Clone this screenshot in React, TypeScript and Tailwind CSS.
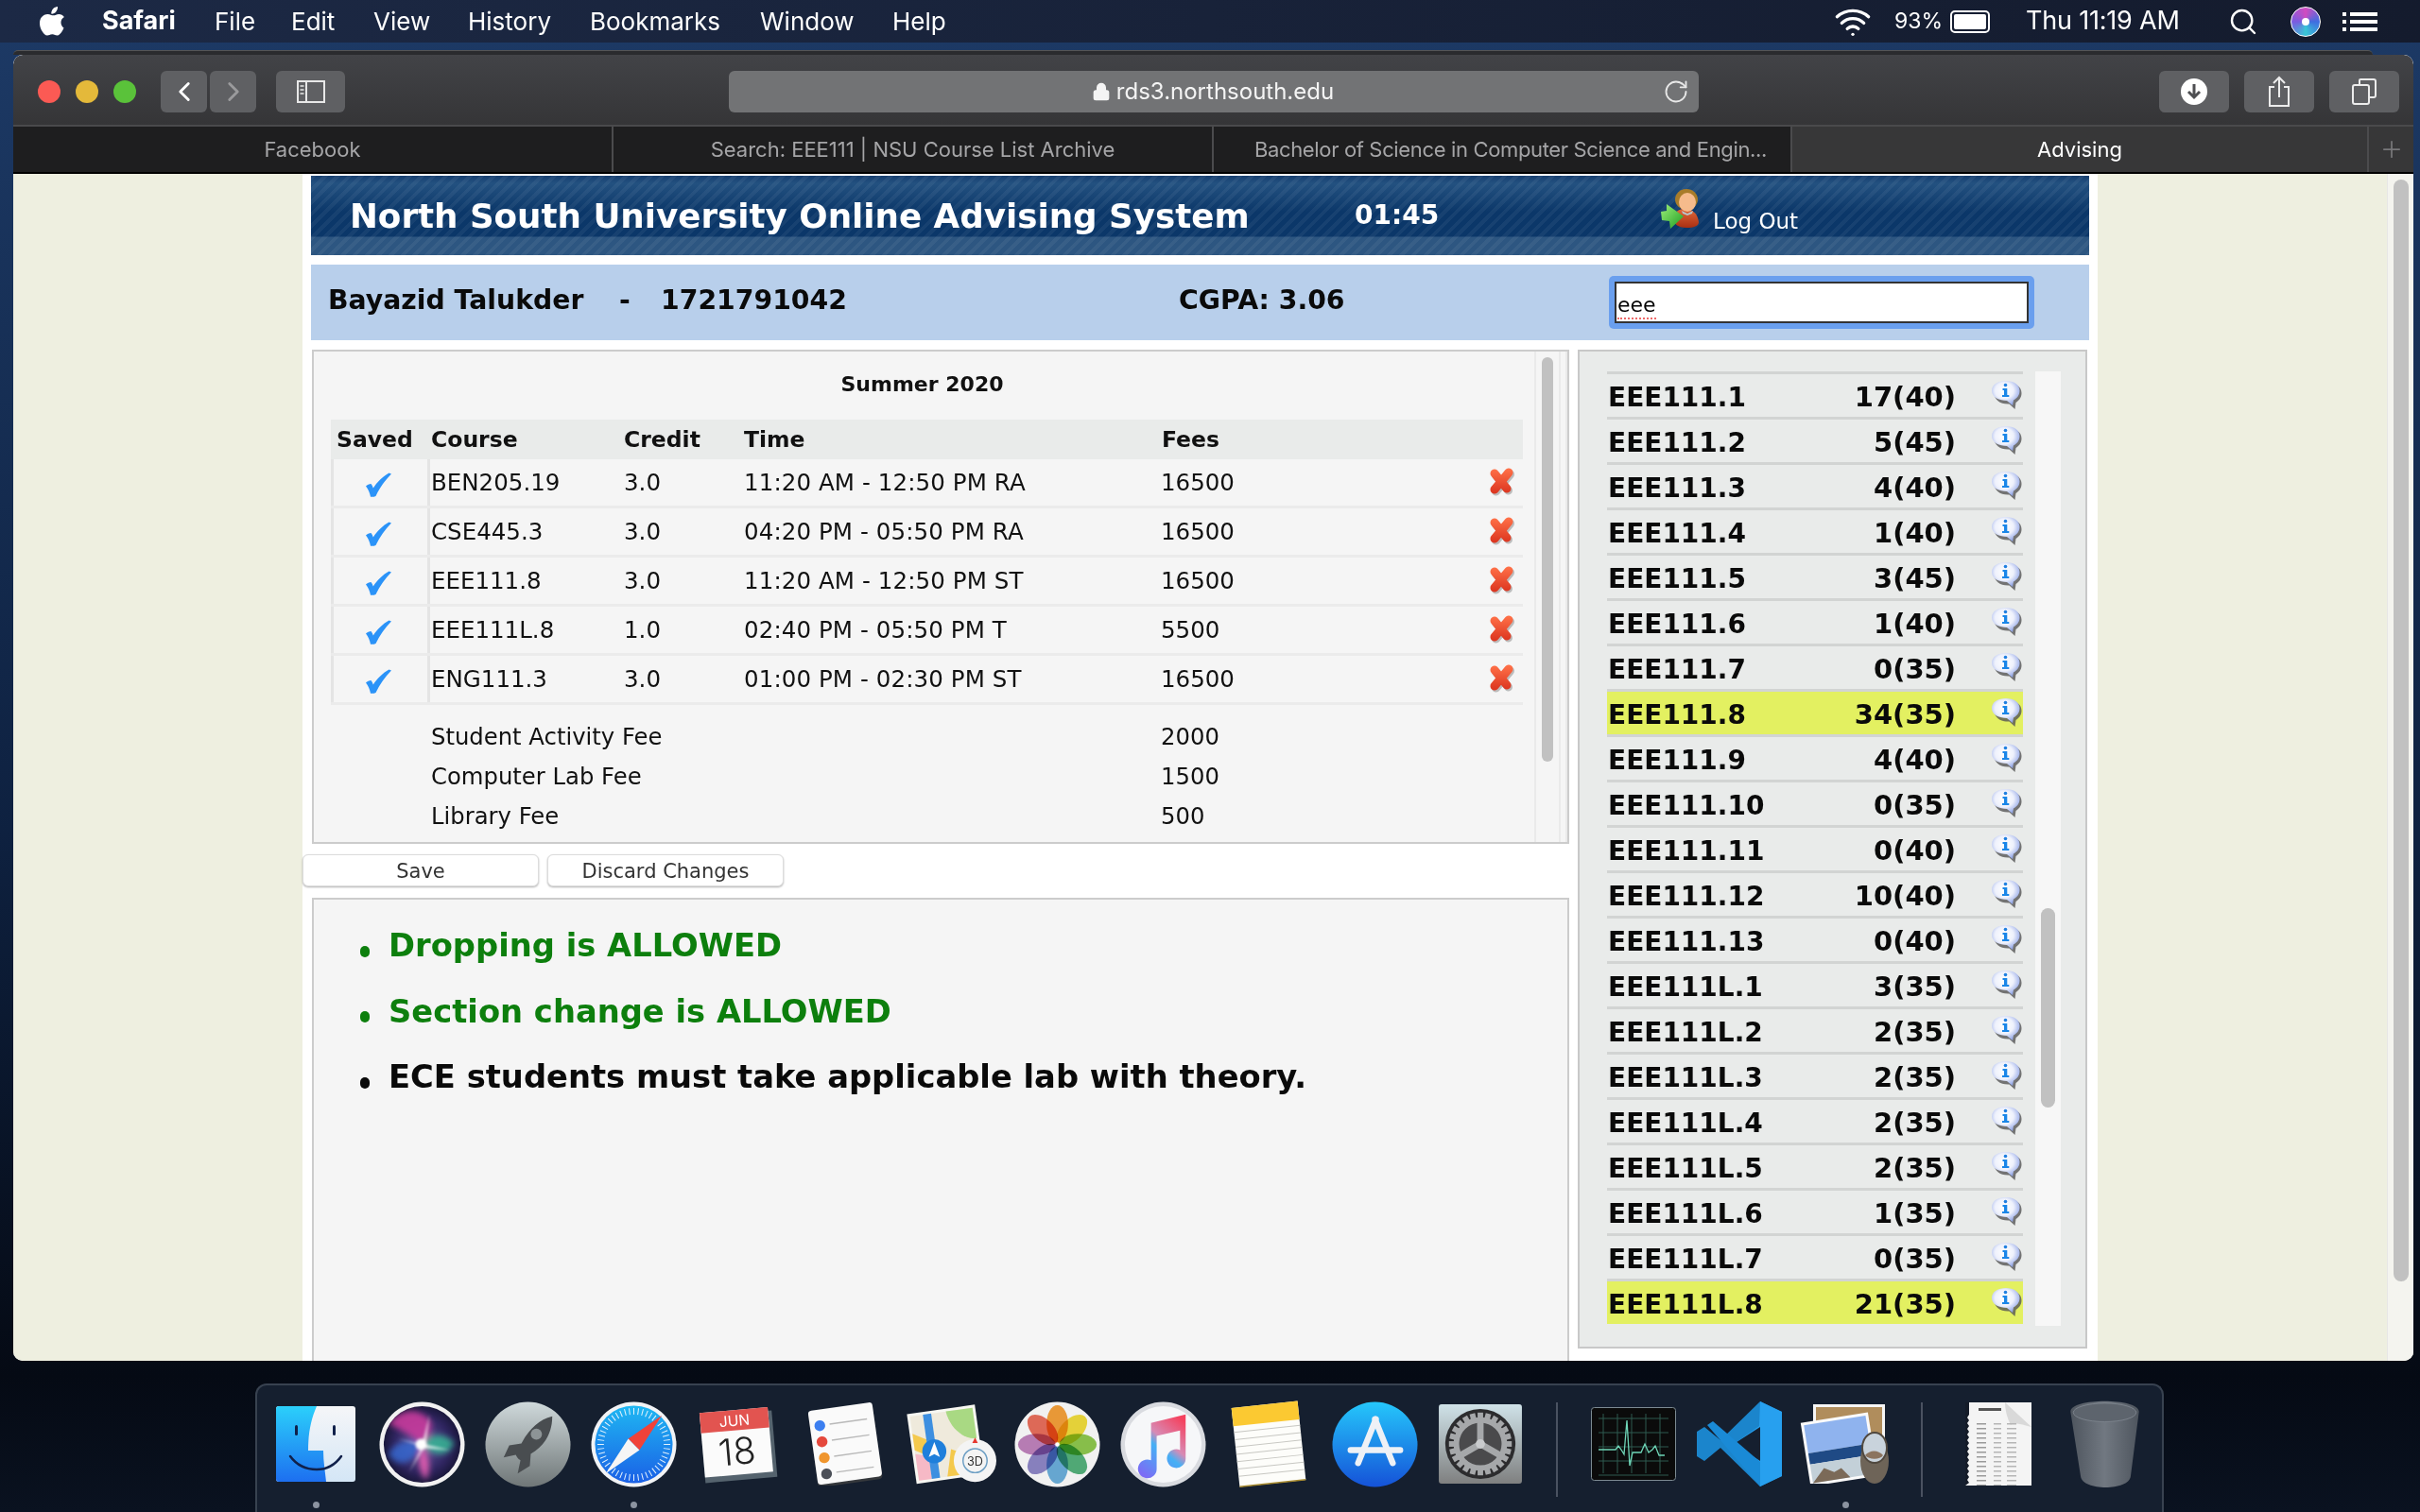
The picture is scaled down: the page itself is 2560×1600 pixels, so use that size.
import { ChevronLeft, ChevronRight, Lock, RotateCw, Plus, Search, Wifi } from 'lucide-react';

const verdana = "font-['DejaVu_Sans',sans-serif]";

const menus = [
  { label: 'File', cls: 'w-[81px]' },
  { label: 'Edit', cls: 'w-[87px]' },
  { label: 'View', cls: 'w-[100px]' },
  { label: 'History', cls: 'w-[129px]' },
  { label: 'Bookmarks', cls: 'w-[180px]' },
  { label: 'Window', cls: 'w-[140px]' },
  { label: 'Help', cls: 'w-[70px]' },
];

const courses = [
  ['BEN205.19', '3.0', '11:20 AM - 12:50 PM RA', '16500'],
  ['CSE445.3', '3.0', '04:20 PM - 05:50 PM RA', '16500'],
  ['EEE111.8', '3.0', '11:20 AM - 12:50 PM ST', '16500'],
  ['EEE111L.8', '1.0', '02:40 PM - 05:50 PM T', '5500'],
  ['ENG111.3', '3.0', '01:00 PM - 02:30 PM ST', '16500'],
];

const fees = [
  ['Student Activity Fee', '2000'],
  ['Computer Lab Fee', '1500'],
  ['Library Fee', '500'],
];

const sections = [
  ['EEE111.1', '17(40)'],
  ['EEE111.2', '5(45)'],
  ['EEE111.3', '4(40)'],
  ['EEE111.4', '1(40)'],
  ['EEE111.5', '3(45)'],
  ['EEE111.6', '1(40)'],
  ['EEE111.7', '0(35)'],
  ['EEE111.8', '34(35)', 'on'],
  ['EEE111.9', '4(40)'],
  ['EEE111.10', '0(35)'],
  ['EEE111.11', '0(40)'],
  ['EEE111.12', '10(40)'],
  ['EEE111.13', '0(40)'],
  ['EEE111L.1', '3(35)'],
  ['EEE111L.2', '2(35)'],
  ['EEE111L.3', '2(35)'],
  ['EEE111L.4', '2(35)'],
  ['EEE111L.5', '2(35)'],
  ['EEE111L.6', '1(35)'],
  ['EEE111L.7', '0(35)'],
  ['EEE111L.8', '21(35)', 'on'],
];

function AppleLogo() {
  return (
    <svg viewBox="0 0 26 31" className="w-[26px] h-[31px]" fill="#fff">
      <path d="M19 0c.2 2.200-.6 4-1.800 5.400-1.300 1.500-3 2.400-4.900 2.200-.2-2 .7-4 1.900-5.300C15.400.9 17.300.1 19 0z" />
      <path d="M25.500 22.500c-.7 1.600-1 2.300-1.900 3.700-1.300 1.900-3 4.300-5.200 4.300-2 0-2.500-1.300-5.100-1.300-2.700 0-3.300 1.300-5.300 1.300-2.200 0-3.800-2.200-5.100-4C-.4 22-1 15.300 1.700 11.500 3.500 9 6.200 7.900 8.500 7.900c2.500 0 4 1.400 6 1.400s3.200-1.400 5.900-1.400c2 0 4.200 1.100 5.500 3-4.900 2.700-4.100 9.500-.4 11.600z" />
    </svg>
  );
}

function CheckMark() {
  return (
    <svg viewBox="0 0 28 26" className="w-[28px] h-[26px]">
      <path d="M1 14.500c1.500-1.500 3.500-2.500 5.500-2.500 1 1.200 1.700 2.700 2.300 4.500C13 10 19 4 25.500 0.500L28 1.500C21 8.500 15.500 16.500 11.500 25c-1.500.8-3.500 1-5.500.8C5.300 21.500 3.500 17.500 1 14.500z" fill="#2b93f8" />
    </svg>
  );
}

function RedX() {
  return (
    <svg viewBox="0 0 32 32" className="w-[32px] h-[32px]">
      <defs>
        <linearGradient id="xred" gradientUnits="userSpaceOnUse" x1="0" y1="2" x2="0" y2="30">
          <stop offset="0" stopColor="#ff7148" />
          <stop offset="1" stopColor="#d9301c" />
        </linearGradient>
      </defs>
      <g fill="none" stroke="#777" strokeOpacity="0.45" strokeWidth="9" strokeLinecap="round" transform="translate(1.500 2)">
        <path d="M8 7l13 16" />
        <path d="M23 6L8 24" />
      </g>
      <g fill="none" stroke="url(#xred)" strokeWidth="9" strokeLinecap="round">
        <path d="M8 7l13 16" />
        <path d="M23 6L8 24" />
      </g>
    </svg>
  );
}

function InfoBubble() {
  return (
    <svg viewBox="0 0 32 30" className="w-[32px] h-[30px]">
      <defs>
        <radialGradient id="ibub" cx="0.45" cy="0.4" r="0.6">
          <stop offset="0" stopColor="#ffffff" />
          <stop offset="0.55" stopColor="#eef1fc" />
          <stop offset="1" stopColor="#96a9e8" />
        </radialGradient>
      </defs>
      <path d="M16 1c8 0 14.500 4 14.500 11 0 5-3 8-6 10l-1 7-6-5.500C8 24 1.500 19 1.500 12S8 1 16 1z" fill="#555" opacity="0.8" transform="translate(1 1)" />
      <path d="M15 0c8 0 14.500 4 14.500 10.500 0 5-3 8-6.500 10l-1 5.500-6-5C8 21 0 17.500 0 10.500S7 0 15 0z" fill="url(#ibub)" />
      <circle cx="14.500" cy="4.500" r="1.800" fill="#1f7fe0" />
      <path d="M11.500 8h4.800v7h2v2h-7.300v-2h2v-5h-1.500z" fill="#1a86e8" />
    </svg>
  );
}

function PersonIcon() {
  return (
    <svg viewBox="0 0 46 46" className="w-[46px] h-[46px]">
      <defs>
        <linearGradient id="shirt" x1="0" y1="0" x2="0" y2="1">
          <stop offset="0" stopColor="#e0683a" />
          <stop offset="1" stopColor="#a92f12" />
        </linearGradient>
        <linearGradient id="arrowg" x1="0" y1="0" x2="1" y2="1">
          <stop offset="0" stopColor="#9df07a" />
          <stop offset="1" stopColor="#1e9c22" />
        </linearGradient>
      </defs>
      <path d="M14 30c1-7 5-9 12-9s13 5 14 14c0 4-5 6-13 6-9 0-14-4-13-11z" fill="url(#shirt)" />
      <ellipse cx="27" cy="11" rx="12" ry="11" fill="#a87c2a" />
      <ellipse cx="28" cy="14" rx="9" ry="10" fill="#f6bb8c" />
      <path d="M22 23l6 3 6-3-1 3-5 2-5-2z" fill="#b9c4c8" />
      <path d="M0 24l6-1 0-7 18 13-14 13-1-8-8-1z" fill="url(#arrowg)" />
    </svg>
  );
}

function Finder() {
  return (
    <svg viewBox="0 0 84 80" className="w-[84px] h-[80px]">
      <defs>
        <linearGradient id="fb" x1="0" y1="0" x2="0" y2="1">
          <stop offset="0" stopColor="#2bd0fb" />
          <stop offset="1" stopColor="#1d6ff0" />
        </linearGradient>
        <linearGradient id="fw" x1="0" y1="0" x2="0" y2="1">
          <stop offset="0" stopColor="#f5f6f8" />
          <stop offset="1" stopColor="#d4e6f6" />
        </linearGradient>
      </defs>
      <rect width="84" height="80" rx="3" fill="url(#fw)" />
      <path d="M3 0h40c-6 14-9 28-9 47h16c0 12 2 23 3 33H3a3 3 0 0 1-3-3V3a3 3 0 0 1 3-3z" fill="url(#fb)" />
      <rect x="20" y="20" width="3" height="11" rx="1.500" fill="#10204a" />
      <rect x="60" y="20" width="3" height="11" rx="1.500" fill="#10204a" />
      <path d="M15 53c8 11 18 14 28 14 10 0 19-4 26-14" fill="none" stroke="#10204a" strokeWidth="2.500" strokeLinecap="round" />
    </svg>
  );
}

function Siri() {
  return (
    <svg viewBox="0 0 92 92" className="w-[91px] h-[91px]">
      <defs>
        <radialGradient id="sb" cx="0.5" cy="0.5" r="0.6">
          <stop offset="0" stopColor="#6a5aa8" />
          <stop offset="0.6" stopColor="#2f2560" />
          <stop offset="1" stopColor="#0b0e22" />
        </radialGradient>
        <filter id="sblur" x="-20%" y="-20%" width="140%" height="140%">
          <feGaussianBlur stdDeviation="3" />
        </filter>
        <filter id="sglow" x="-50%" y="-50%" width="200%" height="200%">
          <feGaussianBlur stdDeviation="1.500" />
        </filter>
        <clipPath id="sclip">
          <circle cx="46" cy="46" r="41" />
        </clipPath>
      </defs>
      <circle cx="46" cy="46" r="45.500" fill="#f1f1f1" />
      <circle cx="46" cy="46" r="41" fill="url(#sb)" />
      <g clipPath="url(#sclip)">
        <g filter="url(#sblur)">
          <path d="M10 24C24 6 44 6 56 22c0 12-4 20-10 24C34 36 22 30 10 24z" fill="#c93a9c" opacity="0.9" />
          <path d="M46 46c10-14 24-12 34-2-4 14-20 18-34 2z" fill="#37b795" opacity="0.85" />
          <path d="M46 46C34 38 18 42 10 56c10 16 26 12 36-10z" fill="#3567cf" opacity="0.85" />
          <path d="M46 46c8 12 10 26 4 38-8-10-10-24-4-38z" fill="#e35cb0" opacity="0.95" />
        </g>
        <g filter="url(#sglow)">
          <path d="M46 46L54 14l-4 32 26 6-28-2-16 26 14-28-26-8z" fill="#fff" opacity="0.7" />
          <circle cx="45" cy="46" r="6" fill="#fff" />
        </g>
      </g>
    </svg>
  );
}

function Launchpad() {
  return (
    <svg viewBox="0 0 92 92" className="w-[91px] h-[91px]">
      <defs>
        <linearGradient id="lp" x1="0" y1="0" x2="0" y2="1">
          <stop offset="0" stopColor="#cfd9db" />
          <stop offset="1" stopColor="#6f7677" />
        </linearGradient>
      </defs>
      <circle cx="46" cy="46" r="45.500" fill="url(#lp)" />
      <path d="M72 16c-14 3-25 14-33 29l-13 2-6 13 13-3c1 2 2 4 5 6l-3 14 13-8 1-13c14-8 23-21 23-40z" fill="#494d50" />
      <circle cx="55" cy="35" r="6" fill="#8d9496" />
    </svg>
  );
}

function Safari() {
  const ticks = Array.from({ length: 48 }, (_, i) => i * 7.500);
  return (
    <svg viewBox="0 0 92 92" className="w-[91px] h-[91px]">
      <defs>
        <linearGradient id="sf" x1="0" y1="0" x2="0" y2="1">
          <stop offset="0" stopColor="#1fb7f2" />
          <stop offset="1" stopColor="#1a60e6" />
        </linearGradient>
      </defs>
      <circle cx="46" cy="46" r="45.500" fill="#f2f3f5" />
      <circle cx="46" cy="46" r="41.500" fill="url(#sf)" />
      {ticks.map((t) => (
        <rect key={t} x="45.500" y="7" width="1" height="7" fill="#e6f3fd" transform={`rotate(${t} 46 46)`} />
      ))}
      <path d="M76 15L40 40l12 12z" fill="#f04239" />
      <path d="M16 77l36-25-12-12z" fill="#f5f5f5" />
    </svg>
  );
}

function Calendar() {
  return (
    <svg viewBox="0 0 90 90" className="w-[88px] h-[88px]">
      <g transform="rotate(-5 45 45)">
        <rect x="5" y="12" width="78" height="72" fill="#55636e" />
        <rect x="5" y="8" width="74" height="70" fill="#fbfbfb" />
        <rect x="5" y="8" width="74" height="22" fill="#e25450" />
        <text x="42" y="25" textAnchor="middle" fontFamily="Inter, sans-serif" fontSize="16" fill="#fff">JUN</text>
        <text x="42" y="67" textAnchor="middle" fontFamily="Inter, sans-serif" fontWeight="300" fontSize="40" fill="#222">18</text>
      </g>
    </svg>
  );
}

function Reminders() {
  const dots = ['#3c7ff0', '#e5483c', '#f0962e', '#4c5058'];
  return (
    <svg viewBox="0 0 84 92" className="w-[80px] h-[88px]">
      <g transform="rotate(-8 42 46)">
        <rect x="6" y="6" width="72" height="84" rx="4" fill="#35383c" />
        <rect x="6" y="4" width="72" height="83" rx="4" fill="#fafafa" />
        {dots.map((c, i) => (
          <g key={c}>
            <circle cx="17" cy={22 + i * 18} r="6" fill={c} />
            <rect x="28" y={21 + i * 18} width="42" height="1.500" fill="#b9b9b9" />
          </g>
        ))}
      </g>
    </svg>
  );
}

function Maps() {
  return (
    <svg viewBox="0 0 98 88" className="w-[96px] h-[88px]">
      <g transform="rotate(-8 45 42)">
        <rect x="6" y="6" width="74" height="76" fill="#f7f7f2" />
        <rect x="9" y="9" width="68" height="70" fill="#efeadc" />
        <path d="M48 9h29v33c-14 0-27-14-29-33z" fill="#a9d983" />
        <path d="M9 28l14 8v18L9 46z" fill="#f4c94d" />
        <path d="M9 50l14 4v25H9z" fill="#f6b9c6" />
        <rect x="23" y="9" width="9" height="70" fill="#3d8fe0" />
        <path d="M48 50l20 10-10 19H40z" fill="#f4c94d" />
      </g>
      <circle cx="31" cy="52" r="13" fill="#1f7fdb" />
      <path d="M31 42l6 16-6-3-6 3z" fill="#fff" />
      <circle cx="75" cy="62" r="23" fill="#f4f4f4" />
      <circle cx="75" cy="62" r="13" fill="none" stroke="#6d9fc4" strokeWidth="1.500" />
      <path d="M75 37l3 6h-6z" fill="#e5372e" />
      <text x="75" y="67" textAnchor="middle" fontFamily="Inter, sans-serif" fontSize="13" fill="#333">3D</text>
    </svg>
  );
}

function Photos() {
  const petals = ['#f6a13a', '#f2dd3c', '#8fc94e', '#54b27c', '#6cb0dc', '#8f87c8', '#c183be', '#ea6f5c'];
  return (
    <svg viewBox="0 0 92 92" className="w-[91px] h-[91px]">
      <circle cx="46" cy="46" r="45.500" fill="#f1f1f1" />
      {petals.map((c, i) => (
        <ellipse key={c} cx="46" cy="24" rx="11.500" ry="20" fill={c} style={{ mixBlendMode: 'multiply' }} transform={`rotate(${i * 45} 46 46)`} />
      ))}
      <circle cx="46" cy="46" r="2" fill="#fff" />
    </svg>
  );
}

function Music() {
  return (
    <svg viewBox="0 0 92 92" className="w-[91px] h-[91px]">
      <defs>
        <linearGradient id="mu" x1="0.2" y1="1" x2="0.8" y2="0">
          <stop offset="0" stopColor="#7c6cf5" />
          <stop offset="0.45" stopColor="#45b0f5" />
          <stop offset="0.6" stopColor="#d78bb5" />
          <stop offset="1" stopColor="#f5425f" />
        </linearGradient>
      </defs>
      <circle cx="46" cy="46" r="45.500" fill="#d9dbe0" />
      <circle cx="46" cy="46" r="41" fill="#f6f7f9" />
      <path d="M33 23l37-9v47a10 10 0 1 1-6-9V31l-25 6v35a10 10 0 1 1-6-9z" fill="url(#mu)" />
    </svg>
  );
}

function Notes() {
  const lines = [30, 38, 46, 54, 62, 70, 78];
  return (
    <svg viewBox="0 0 84 94" className="w-[82px] h-[92px]">
      <g transform="rotate(-6 42 47)">
        <rect x="6" y="4" width="72" height="86" fill="#fdfdfa" />
        <rect x="6" y="4" width="72" height="20" fill="#fbc932" />
        {lines.map((y) => (
          <rect key={y} x="6" y={y} width="72" height="1" fill="#c7c7c2" />
        ))}
        <rect x="6" y="89" width="72" height="1.500" fill="#a78a2e" />
      </g>
    </svg>
  );
}

function AppStore() {
  return (
    <svg viewBox="0 0 92 92" className="w-[91px] h-[91px]">
      <defs>
        <linearGradient id="as" x1="0" y1="0" x2="0" y2="1">
          <stop offset="0" stopColor="#25c7fb" />
          <stop offset="1" stopColor="#1552d8" />
        </linearGradient>
      </defs>
      <circle cx="46" cy="46" r="45.500" fill="url(#as)" />
      <g stroke="#eef1f6" strokeWidth="6.500" strokeLinecap="round">
        <path d="M47 19L28 66" />
        <path d="M46 19l19 47" />
        <path d="M20 52h53" />
      </g>
    </svg>
  );
}

function SystemPrefs() {
  const teeth = Array.from({ length: 24 }, (_, i) => i * 15);
  return (
    <svg viewBox="0 0 90 86" className="w-[90px] h-[84px]">
      <defs>
        <linearGradient id="sp" x1="0" y1="0" x2="0" y2="1">
          <stop offset="0" stopColor="#cfe2e8" />
          <stop offset="1" stopColor="#7f8080" />
        </linearGradient>
      </defs>
      <rect width="90" height="86" rx="3" fill="url(#sp)" />
      <circle cx="45" cy="43" r="38" fill="#2c2c2e" />
      {teeth.map((t) => (
        <rect key={t} x="42" y="9" width="6" height="9" fill="#a6a8aa" transform={`rotate(${t} 45 43)`} />
      ))}
      <circle cx="45" cy="43" r="26" fill="#4a4a4c" stroke="#a6a8aa" strokeWidth="6" />
      <g stroke="#a6a8aa" strokeWidth="7">
        <path d="M45 43V19" />
        <path d="M45 43l21 12" />
        <path d="M45 43L24 55" />
      </g>
      <circle cx="45" cy="43" r="5" fill="#c9cbcd" />
    </svg>
  );
}

function ActivityMonitor() {
  const v = [10, 25, 40, 55, 70];
  return (
    <svg viewBox="0 0 90 78" className="w-[90px] h-[78px]">
      <rect x="0.500" y="0.500" width="89" height="77" rx="3" fill="#0b0b0b" stroke="#7c8a92" />
      <g stroke="#2e5a50" strokeWidth="1">
        {v.map((x) => (
          <path key={x} d={`M${x + 3} 7V70`} />
        ))}
        {v.map((y) => (
          <path key={y} d={`M8 ${y + 2}H82`} />
        ))}
      </g>
      <path d="M8 45h18l3-4 3 4 3 5 3-36 3 48 3-14h9l4-9 4 9 4-3 3-4 4 10h6" fill="none" stroke="#6fd6b8" strokeWidth="1.300" />
    </svg>
  );
}

function VsCode() {
  return (
    <svg viewBox="0 0 92 92" className="w-[92px] h-[92px]">
      <path d="M68 1L26 42 9 28 1 33v26l8 5 17-14 42 41 23-11V12z" fill="#1b85cc" />
      <path d="M68 1l-1 26-27 19 27 19 1 26 23-11V12z" fill="#27a0ef" />
      <path d="M68 28v36L40 46z" fill="#151f2f" />
      <path d="M12 26L68 91 68 65 18 22z" fill="#1a8ad6" />
    </svg>
  );
}

function Preview() {
  return (
    <svg viewBox="0 0 96 84" className="w-[96px] h-[84px]">
      <rect x="14" y="0" width="76" height="40" fill="#f5f5f5" />
      <rect x="17" y="3" width="70" height="37" fill="#b08d5c" />
      <g transform="rotate(-9 40 50)">
        <rect x="6" y="14" width="72" height="68" fill="#fafafa" />
        <rect x="9" y="17" width="66" height="30" fill="#8fb3ee" />
        <rect x="9" y="47" width="66" height="12" fill="#1f4a85" />
        <rect x="9" y="59" width="66" height="20" fill="#c3d0d8" />
        <path d="M9 79l14-14 10 6 8-3 8 11z" fill="#7b6a58" />
      </g>
      <ellipse cx="79" cy="60" rx="15" ry="24" fill="#6e6458" />
      <ellipse cx="79" cy="46" rx="13" ry="16" fill="#c9d3dc" stroke="#50483f" strokeWidth="2" />
      <path d="M69 54c5-6 14-6 19 0-3 5-15 5-19 0z" fill="#8b7460" />
    </svg>
  );
}

function DocThumb() {
  const rows = Array.from({ length: 16 }, (_, i) => 22 + i * 5);
  return (
    <svg viewBox="0 0 70 88" className="w-[70px] h-[88px]">
      <rect width="70" height="88" fill="#f4f4f4" />
      <path d="M0 0v88l4-3-2-3 2-3-2-3 2-3-2-3 2-3-2-3 2-3-2-3 2-3-2-3 2-3-2-3 2-3-2-3 2-3-2-3 2-3-2-3 2-3-2-3 2-3-2-3 2-3V0z" fill="#141b28" />
      <rect x="14" y="6" width="24" height="3" fill="#555" />
      <path d="M42 0l28 26c-10-2-18-6-22-2-4-8-6-16-6-24z" fill="#d9d9d9" />
      {rows.map((y) => (
        <g key={y}>
          <rect x="12" y={y} width="10" height="1.500" fill="#9a9a9a" />
          <rect x="30" y={y} width="8" height="1.500" fill="#b5b5b5" />
          <rect x="44" y={y} width="10" height="1.500" fill="#b5b5b5" />
        </g>
      ))}
    </svg>
  );
}

function Trash() {
  return (
    <svg viewBox="0 0 76 94" className="w-[75px] h-[92px]">
      <defs>
        <linearGradient id="tr" x1="0" y1="0" x2="1" y2="0">
          <stop offset="0" stopColor="#4e555e" />
          <stop offset="0.5" stopColor="#717881" />
          <stop offset="1" stopColor="#4e555e" />
        </linearGradient>
      </defs>
      <path d="M1 12c0-15 74-15 74 0L66 82c-2 16-52 16-54 0z" fill="url(#tr)" />
      <ellipse cx="38" cy="13" rx="34" ry="10" fill="#5d646d" stroke="#7b828b" strokeWidth="1" />
    </svg>
  );
}

const dock = [
  { Icon: Finder, dot: true },
  { Icon: Siri },
  { Icon: Launchpad },
  { Icon: Safari, dot: true },
  { Icon: Calendar },
  { Icon: Reminders },
  { Icon: Maps },
  { Icon: Photos },
  { Icon: Music },
  { Icon: Notes },
  { Icon: AppStore },
  { Icon: SystemPrefs },
];

function DockItem({ Icon, dot }: { Icon: () => React.ReactElement; dot?: boolean }) {
  return (
    <div className="w-[112px] flex flex-col items-center">
      <div className="h-[108px] flex items-center justify-center">
        <Icon />
      </div>
      <div className={`mt-[7px] w-[7px] h-[7px] rounded-full ${dot ? 'bg-[#8b93a0]' : 'bg-transparent'}`} />
    </div>
  );
}

function DockDivider() {
  return (
    <div className="w-[50px] flex justify-center pt-[10px]">
      <div className="w-[2px] h-[100px] bg-[#4a5261]" />
    </div>
  );
}

function ToolButton({ children, className = 'w-[74px]' }: { children: React.ReactNode; className?: string }) {
  return (
    <div className={`h-[44px] rounded-[6px] bg-[#5f6063] flex items-center justify-center ${className}`}>{children}</div>
  );
}

function MenuBar() {
  return (
    <div className="h-[45px] flex items-center bg-[linear-gradient(90deg,#1c2945,#141b2d)] text-white font-['Inter',sans-serif] text-[26px] shrink-0">
      <div className="ml-[42px] w-[66px]">
        <AppleLogo />
      </div>
      <div className="w-[119px] font-bold text-[27px]">Safari</div>
      {menus.map((m) => (
        <div key={m.label} className={m.cls}>
          {m.label}
        </div>
      ))}
      <div className="flex-1" />
      <Wifi size={40} strokeWidth={2} className="mr-[24px]" />
      <div className="w-[59px] text-[23px]">93%</div>
      <div className="w-[42px] h-[24px] border-2 border-white rounded-[5px] p-[2px] mr-[38px] relative">
        <div className="w-full h-full bg-white rounded-[2px]" />
      </div>
      <div className="w-[214px] text-[27px] tracking-[-0.2px]">Thu 11:19 AM</div>
      <Search size={32} strokeWidth={1.8} className="mr-[34px]" />
      <div className="w-[32px] h-[32px] rounded-full bg-[conic-gradient(#d14bc0,#3f6de0,#39c7d6,#7a5be0,#d14bc0)] border border-white flex items-center justify-center mr-[23px]">
        <div className="w-[8px] h-[8px] bg-white rounded-full" />
      </div>
      <div className="w-[37px] mr-[45px] flex flex-col gap-[4px]">
        {[0, 1, 2].map((i) => (
          <div key={i} className="flex gap-[4px]">
            <div className="w-[4px] h-[4px] bg-white" />
            <div className="flex-1 h-[4px] bg-white" />
          </div>
        ))}
      </div>
    </div>
  );
}

function Toolbar() {
  return (
    <div className="h-[76px] shrink-0 bg-[linear-gradient(180deg,#424347,#353537)] border-b-[2px] border-[#4a4a4c] flex items-center pl-[26px] pt-[3px] pr-[15px] rounded-t-[10px]">
      <div className="flex gap-[16px] mr-[26px]">
        <div className="w-[24px] h-[24px] rounded-full bg-[#fb5a54]" />
        <div className="w-[24px] h-[24px] rounded-full bg-[#e4b93a]" />
        <div className="w-[24px] h-[24px] rounded-full bg-[#5ac23a]" />
      </div>
      <ToolButton className="w-[49px]">
        <ChevronLeft size={34} strokeWidth={2} className="text-white" />
      </ToolButton>
      <ToolButton className="w-[49px] ml-[3px]">
        <ChevronRight size={34} strokeWidth={2} className="text-[#9a9a9c]" />
      </ToolButton>
      <ToolButton className="w-[73px] ml-[21px]">
        <svg viewBox="0 0 30 24" className="w-[30px] h-[24px]" fill="none" stroke="#e8e8e8" strokeWidth="2">
          <rect x="1" y="1" width="28" height="22" />
          <path d="M10 1v22" />
          <path d="M3.500 6h4M3.500 10h4M3.500 14h4" strokeWidth="1.500" />
        </svg>
      </ToolButton>
      <div className="ml-[406px] w-[1026px] h-[44px] rounded-[6px] bg-[#727375] flex items-center text-[#f4f4f4] text-[24px] font-['Inter',sans-serif] relative">
        <div className="w-full flex items-center justify-center gap-[6px] pr-[2px]">
          <Lock size={20} fill="#f4f4f4" strokeWidth={2} />
          <span>rds3.northsouth.edu</span>
        </div>
        <RotateCw size={28} strokeWidth={1.6} className="absolute right-[10px] top-[8px] text-[#e8e8e8]" />
      </div>
      <div className="flex-1" />
      <div className="flex gap-[16px]">
        <ToolButton>
          <div className="w-[28px] h-[28px] rounded-full bg-white flex items-center justify-center">
            <svg viewBox="0 0 16 18" className="w-[16px] h-[18px]" fill="none" stroke="#4e4f52" strokeWidth="3">
              <path d="M8 1v14M2 9l6 6 6-6" />
            </svg>
          </div>
        </ToolButton>
        <ToolButton>
          <svg viewBox="0 0 24 34" className="w-[24px] h-[34px]" fill="none" stroke="#ececec" strokeWidth="2">
            <path d="M7 12H2v20h20V12h-5" />
            <path d="M12 23V2M6 8l6-6 6 6" />
          </svg>
        </ToolButton>
        <ToolButton>
          <svg viewBox="0 0 26 28" className="w-[26px] h-[28px]" fill="none" stroke="#ececec" strokeWidth="2">
            <rect x="1" y="7" width="17" height="20" rx="2" />
            <path d="M8 7V2a1 1 0 0 1 1-1h14a2 2 0 0 1 2 2v15a2 2 0 0 1-2 2h-5" />
          </svg>
        </ToolButton>
      </div>
    </div>
  );
}

function TabBar() {
  const inactive = "h-full flex items-center justify-center text-[#a5a5a7] bg-[#1e1e1f] border-r-[2px] border-[#4b4b4d]";
  return (
    <div className="h-[50px] shrink-0 flex text-[22px] font-['Inter',sans-serif] border-b-[2px] border-black">
      <div className={`w-[635px] ${inactive}`}>Facebook</div>
      <div className={`w-[635px] ${inactive}`}>Search: EEE111 | NSU Course List Archive</div>
      <div className={`w-[612px] pl-[18px] tracking-[-0.35px] ${inactive}`}>Bachelor of Science in Computer Science and Engin...</div>
      <div className="w-[610px] h-full flex items-center justify-center text-white bg-[#373738] border-r-[2px] border-[#4b4b4d]">
        Advising
      </div>
      <div className="flex-1 h-full bg-[#373738] flex items-center justify-center">
        <Plus size={28} strokeWidth={1.5} className="text-[#77777a]" />
      </div>
    </div>
  );
}

function Banner() {
  return (
    <div className="ml-[9px] w-[1881px] h-[84px] flex items-center text-white bg-[image:repeating-linear-gradient(135deg,rgba(255,255,255,0.05)_0px,rgba(255,255,255,0.05)_4px,transparent_4px,transparent_9px),linear-gradient(180deg,#173f70_0px,#235180_8px,#0b3769_38px,#0b3769_64px,#2d5681_65px,#2d5681_84px)]">
      <div className="ml-[41px] w-[1063px] text-[35.700px] font-bold pt-[2px]">North South University Online Advising System</div>
      <div className="w-[327px] text-[28px] font-bold">01:45</div>
      <div className="mb-[10px] mr-[6px] -ml-[3px]">
        <PersonIcon />
      </div>
      <div className="text-[23px] mt-[12px] ml-[3px]">Log Out</div>
    </div>
  );
}

function StudentBar() {
  return (
    <div className="ml-[9px] mt-[10px] w-[1881px] h-[80px] bg-[#b8cfeb] flex items-center text-[28.300px] font-bold text-[#0a0a0a]">
      <div className="ml-[18px] w-[308px] pb-[4px]">Bayazid Talukder</div>
      <div className="w-[44px] pb-[4px]">-</div>
      <div className="w-[548px] pb-[4px]">1721791042</div>
      <div className="w-[455px] pb-[4px]">CGPA: 3.06</div>
      <div className="w-[450px] h-[56px] rounded-[5px] bg-[#6a9fee] p-[6px]">
        <div className="w-full h-full bg-white border-[2px] border-[#333] flex items-end pl-[1px] pb-[2px] text-[22px] font-normal text-black leading-[30px]">
          <span className="border-b-2 border-dotted border-[#ee6a6a] leading-[26px]">eee</span>
        </div>
      </div>
    </div>
  );
}

function CoursePanel() {
  return (
    <div className="h-[523px] border-[2px] border-[#cccccc] bg-[#f5f5f5] flex overflow-hidden text-[24.500px] text-[#111]">
      <div className="w-[1291px] pl-[18px] pr-[12px]">
        <div className="h-[72px] pb-[4px] flex items-center justify-center text-[22px] font-bold pr-[10px]">Summer 2020</div>
        <div className="h-[42px] pt-[2px] bg-[#e9ebea] grid grid-cols-[100px_204px_127px_442px_1fr] items-center font-bold pl-[6px] text-[23.500px]">
          <div>Saved</div>
          <div>Course</div>
          <div>Credit</div>
          <div>Time</div>
          <div>Fees</div>
        </div>
        {courses.map(([code, credit, time, fee]) => (
          <div key={code} className="h-[52px] border-b-[3px] border-[#ebebeb] grid grid-cols-[102px_204px_127px_442px_1fr_auto] items-center">
            <div className="h-full border-x-[3px] border-[#e4e4e4] flex items-center justify-center pt-[4px] pr-[6px] mr-[-3px]">
              <CheckMark />
            </div>
            <div className="pl-[4px] pt-[2px]">{code}</div>
            <div className="pl-[4px] pt-[2px]">{credit}</div>
            <div className="pl-[4px] pt-[2px] tracking-[0.1px]">{time}</div>
            <div className="pl-[3px] pt-[2px]">{fee}</div>
            <div className="mr-[6px] mb-[2px]">
              <RedX />
            </div>
          </div>
        ))}
        <div className="mt-[13px] text-[24.300px]">
          {fees.map(([name, fee]) => (
            <div key={name} className="h-[42px] grid grid-cols-[102px_204px_127px_442px_1fr] items-center">
              <div />
              <div className="pl-[4px] col-span-3">{name}</div>
              <div className="pl-[3px]">{fee}</div>
            </div>
          ))}
        </div>
      </div>
      <div className="w-[28px] border-x-[2px] border-[#eaeaea] px-[6px] pt-[6px]">
        <div className="h-[428px] w-full rounded-full bg-[#c1c1c1]" />
      </div>
      <div className="flex-1 border-r-[2px] border-[#eaeaea]" />
    </div>
  );
}

function Notices() {
  const items = [
    ['Dropping is ALLOWED', 'text-[#0d7f0d]'],
    ['Section change is ALLOWED', 'text-[#0d7f0d]'],
    ['ECE students must take applicable lab with theory.', 'text-[#0a0a0a]'],
  ];
  return (
    <div className="flex-1 mt-[12px] border-[2px] border-b-0 border-[#cccccc] bg-[#f5f5f5] pt-[15px] pl-[79px] font-bold text-[33.750px]">
      {items.map(([text, color]) => (
        <div key={text} className={`h-[69.500px] flex items-center ${color}`}>
          <div className="w-[10px] h-[12px] rounded-full bg-current mt-[10px] mr-[20px] -ml-[30px]" />
          <span>{text}</span>
        </div>
      ))}
    </div>
  );
}

function SectionPanel() {
  return (
    <div className="ml-[9px] w-[539px] h-[1057px] border-[2px] border-[#c8c8c8] bg-[#e9ebea] flex pl-[29px] pt-[21px]">
      <div className="w-[440px]">
        {sections.map(([name, count, on]) => (
          <div
            key={name}
            className={`h-[48px] border-t-[3px] border-[#d2d4d3] flex items-center pl-[1px] text-[28px] font-bold text-[#0a0a0a] ${on ? 'bg-[#e3f061]' : ''}`}
          >
            <div className="w-[210px] pt-[4px]">{name}</div>
            <div className="w-[158px] text-right text-[29px] pt-[4px]">{count}</div>
            <div className="ml-[38px] mb-[4px] mt-[2px]">
              <InfoBubble />
            </div>
          </div>
        ))}
      </div>
      <div className="ml-[13px] w-[27px] h-[1010px] bg-[#f7f7f7] pt-[568px] px-[6px]">
        <div className="h-[211px] w-full rounded-full bg-[#c1c1c1]" />
      </div>
    </div>
  );
}

function SaveButton({ label }: { label: string }) {
  return (
    <div className="w-[250px] h-[34px] pt-[3px] rounded-[6px] bg-white border border-[#dcdcdc] shadow-[0_1px_2px_rgba(0,0,0,0.3)] flex items-center justify-center text-[21px] text-[#333]">
      {label}
    </div>
  );
}

function PageBody() {
  return (
    <div className={`flex-1 min-h-0 flex bg-[#eeefe0] ${verdana}`}>
      <div className="w-[306px] shrink-0" />
      <div className="w-[1899px] shrink-0 bg-white pt-[2px] flex flex-col">
        <Banner />
        <StudentBar />
        <div className="flex flex-1 min-h-0 mt-[10px]">
          <div className="w-[1340px] flex flex-col">
            <div className="pl-[10px]">
              <CoursePanel />
            </div>
            <div className="flex gap-[9px] mt-[11px]">
              <SaveButton label="Save" />
              <SaveButton label="Discard Changes" />
            </div>
            <div className="flex-1 min-h-0 pl-[10px] flex flex-col">
              <Notices />
            </div>
          </div>
          <SectionPanel />
        </div>
      </div>
      <div className="w-[306px] shrink-0" />
      <div className="flex-1 border-l border-[#e6e6e6] bg-[#f4f4ef] pl-[6px] pt-[6px]">
        <div className="w-[16px] h-[1166px] rounded-full bg-[#c1c1c1]" />
      </div>
    </div>
  );
}

function Dock() {
  return (
    <div className="mt-[24px] ml-[270px] w-[2019px] h-[136px] rounded-t-[12px] bg-[#151f2f] border-t-[2px] border-x-[2px] border-[#384250] flex items-start pl-[6px] pt-[8px]">
      {dock.map((d, i) => (
        <DockItem key={i} Icon={d.Icon} dot={d.dot} />
      ))}
      <DockDivider />
      <DockItem Icon={ActivityMonitor} />
      <DockItem Icon={VsCode} />
      <DockItem Icon={Preview} dot />
      <DockDivider />
      <DockItem Icon={DocThumb} />
      <DockItem Icon={Trash} />
    </div>
  );
}

export default function App() {
  return (
    <div className="w-[2560px] h-[1600px] overflow-hidden flex flex-col bg-[linear-gradient(180deg,#1d3a66_0%,#0e2140_55%,#050a14_91%,#0a1220_100%)]">
      <MenuBar />
      <div className="mt-[8px] ml-[14px] w-[2496px] h-[5px] rounded-t-[8px] bg-[#2a2b2e] border-t border-[#555] shrink-0" />
      <div className="ml-[14px] w-[2539px] h-[1382px] shrink-0 rounded-[10px] overflow-hidden flex flex-col bg-white">
        <Toolbar />
        <TabBar />
        <PageBody />
      </div>
      <Dock />
    </div>
  );
}
